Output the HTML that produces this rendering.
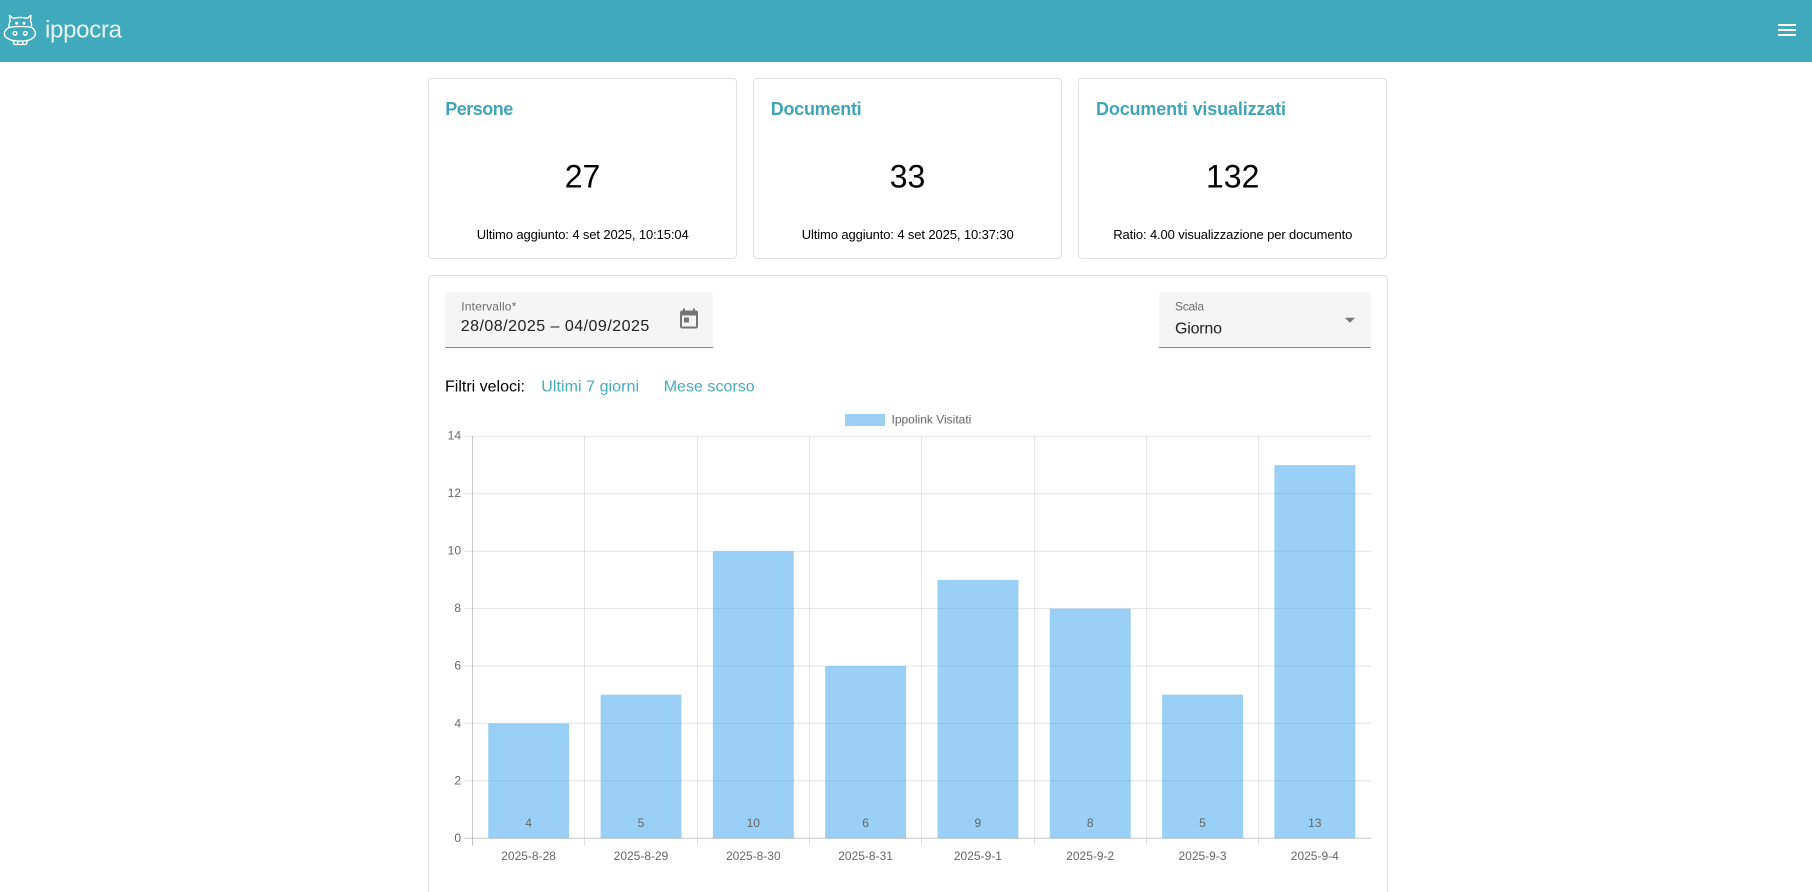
<!DOCTYPE html>
<html lang="it">
<head>
<meta charset="utf-8">
<title>ippocra</title>
<style>
html,body{margin:0;padding:0;width:1812px;height:892px;overflow:hidden;background:#fff;font-family:"Liberation Sans",Arial,sans-serif}
.nav{position:absolute;left:0;top:0;width:1812px;height:62px;background:#40a9bc}
.card{position:absolute;box-sizing:border-box;background:#fff;border:1px solid #e0e0e0;border-radius:4px}
.field{position:absolute;box-sizing:border-box;top:292px;height:56px;background:#f5f5f5;border-radius:4px 4px 0 0;border-bottom:1px solid #8a8a8a}
svg.layer{position:absolute;left:0;top:0}
text{font-family:"Liberation Sans",Arial,sans-serif}
</style>
</head>
<body>
<div class="nav"></div>
<div class="card" style="left:428px;top:78px;width:309px;height:181px"></div>
<div class="card" style="left:753px;top:78px;width:309px;height:181px"></div>
<div class="card" style="left:1078px;top:78px;width:309px;height:181px"></div>
<div class="card" style="left:428px;top:275px;width:960px;height:617px;border-bottom:none;border-radius:4px 4px 0 0"></div>
<div class="field" style="left:445px;width:268px"></div>
<div class="field" style="left:1159px;width:212px"></div>

<svg class="layer" width="1812" height="892" viewBox="0 0 1812 892" xmlns="http://www.w3.org/2000/svg">
  <!-- logo -->
  <g fill="none" stroke="#fff" stroke-width="1.4" stroke-linejoin="round" stroke-linecap="round">
    <path d="M9.5 15.5 L13.5 18.5 Q20.3 16.4 27.2 18.5 L30.8 15.2 L30.6 21.2 Q32 24 31.4 27.4"/>
    <path d="M9.5 15.5 L10.2 21.2 Q8.6 24 9.2 27.4"/>
    <path d="M9.2 27.4 Q20.3 25.4 31.4 27.4 Q35.6 30 35.4 33.8 Q35 38 28.5 40.3 Q20 42 12 40.3 Q4.6 38 4.3 33.8 Q4.6 30 9.2 27.4Z"/>
    <circle cx="15" cy="33.3" r="1.9"/>
    <circle cx="25.3" cy="33.3" r="1.9"/>
    <path d="M13 41 L14.2 44.4 H26.2 L27.4 41 M17.8 41.5 V44.4 M22.8 41.5 V44.4"/>
  </g>
  <circle cx="16.7" cy="23.3" r="1.5" fill="#fff"/>
  <circle cx="24" cy="23.3" r="1.5" fill="#fff"/>
  <text x="45" y="37.3" font-size="24" fill="#fff" fill-opacity=".88" textLength="77">ippocra</text>

  <!-- menu -->
  <rect x="1778" y="24" width="18" height="2" fill="#fff"/>
  <rect x="1778" y="29" width="18" height="2" fill="#fff"/>
  <rect x="1778" y="34" width="18" height="2" fill="#fff"/>

  <!-- card titles -->
  <g font-size="18" font-weight="700" fill="#40a5b6">
    <text x="445.3" y="115" textLength="68">Persone</text>
    <text x="770.7" y="115" textLength="91">Documenti</text>
    <text x="1096" y="115" textLength="190">Documenti visualizzati</text>
  </g>
  <!-- card numbers -->
  <g font-size="32" fill="#000" text-anchor="middle">
    <text x="582.5" y="187.3">27</text>
    <text x="907.5" y="187.3">33</text>
    <text x="1232.7" y="187.3">132</text>
  </g>
  <!-- card subtexts -->
  <g font-size="13" fill="#000">
    <text x="476.7" y="239" textLength="212">Ultimo aggiunto: 4 set 2025, 10:15:04</text>
    <text x="801.7" y="239" textLength="212">Ultimo aggiunto: 4 set 2025, 10:37:30</text>
    <text x="1113.3" y="239" textLength="239">Ratio: 4.00 visualizzazione per documento</text>
  </g>

  <!-- form fields -->
  <text x="461.3" y="310.7" font-size="12" fill="#6e6e6e" textLength="55">Intervallo*</text>
  <text x="460.7" y="331" font-size="16" fill="#212121" textLength="188.6">28/08/2025 – 04/09/2025</text>
  <path transform="translate(677 307.5)" fill="#757575" d="M19 3h-1V1h-2v2H8V1H6v2H5c-1.11 0-1.99.9-1.99 2L3 19c0 1.1.89 2 2 2h14c1.1 0 2-.9 2-2V5c0-1.1-.9-2-2-2zm0 16H5V8h14v11zM7 10h5v5H7z"/>
  <text x="1175" y="310.7" font-size="12" fill="#6e6e6e" textLength="29">Scala</text>
  <text x="1175" y="333.3" font-size="16" fill="#212121" textLength="47">Giorno</text>
  <path d="M1345 317.7h10l-5 5z" fill="#757575"/>

  <!-- quick filters -->
  <text x="445" y="391.7" font-size="16" fill="#000" textLength="80">Filtri veloci:</text>
  <text x="541.3" y="391.7" font-size="16" fill="#46acbf" textLength="97.7">Ultimi 7 giorni</text>
  <text x="663.7" y="391.7" font-size="16" fill="#46acbf" textLength="91">Mese scorso</text>

  <!-- legend -->
  <rect x="845" y="414" width="40" height="12" fill="#9bd0f5"/>
  <text x="891.5" y="423.3" font-size="12" fill="#666">Ippolink Visitati</text>

  <!-- grid -->
  <g stroke="#000" stroke-opacity=".1" stroke-width="1" fill="none">
    <path d="M464 436.4H1371M464 493.8H1371M464 551.2H1371M464 608.6H1371M464 666H1371M464 723.4H1371M464 780.8H1371"/>
    <path d="M584.5 436V846M697.5 436V846M809.5 436V846M921.5 436V846M1034.5 436V846M1146.5 436V846M1258.5 436V846"/>
  </g>
  <g stroke="#000" stroke-opacity=".22" stroke-width="1" fill="none">
    <path d="M472.5 436V846"/>
    <path d="M464 838.2H1371"/>
  </g>

  <!-- bars -->
  <g fill="#36a2eb" fill-opacity=".5">
    <rect x="488.2" y="723.4" width="80.9" height="114.8"/>
    <rect x="600.6" y="694.7" width="80.9" height="143.5"/>
    <rect x="712.9" y="551.2" width="80.9" height="287"/>
    <rect x="825.2" y="666" width="80.9" height="172.2"/>
    <rect x="937.5" y="579.9" width="80.9" height="258.3"/>
    <rect x="1049.8" y="608.6" width="80.9" height="229.6"/>
    <rect x="1162.1" y="694.7" width="80.9" height="143.5"/>
    <rect x="1274.4" y="465.1" width="80.9" height="373.1"/>
  </g>

  <!-- y labels -->
  <g font-size="12" fill="#666" text-anchor="end">
    <text x="461" y="439.5">14</text>
    <text x="461" y="497">12</text>
    <text x="461" y="554.5">10</text>
    <text x="461" y="612">8</text>
    <text x="461" y="669.5">6</text>
    <text x="461" y="727.3">4</text>
    <text x="461" y="784.5">2</text>
    <text x="461" y="842">0</text>
  </g>
  <!-- data labels -->
  <g font-size="12" fill="#666" text-anchor="middle">
    <text x="528.6" y="827">4</text>
    <text x="641" y="827">5</text>
    <text x="753.3" y="827">10</text>
    <text x="865.6" y="827">6</text>
    <text x="977.9" y="827">9</text>
    <text x="1090.2" y="827">8</text>
    <text x="1202.5" y="827">5</text>
    <text x="1314.8" y="827">13</text>
  </g>
  <!-- x labels -->
  <g font-size="12" fill="#666" text-anchor="middle">
    <text x="528.6" y="860">2025-8-28</text>
    <text x="641" y="860">2025-8-29</text>
    <text x="753.3" y="860">2025-8-30</text>
    <text x="865.6" y="860">2025-8-31</text>
    <text x="977.9" y="860">2025-9-1</text>
    <text x="1090.2" y="860">2025-9-2</text>
    <text x="1202.5" y="860">2025-9-3</text>
    <text x="1314.8" y="860">2025-9-4</text>
  </g>
</svg>
</body>
</html>
